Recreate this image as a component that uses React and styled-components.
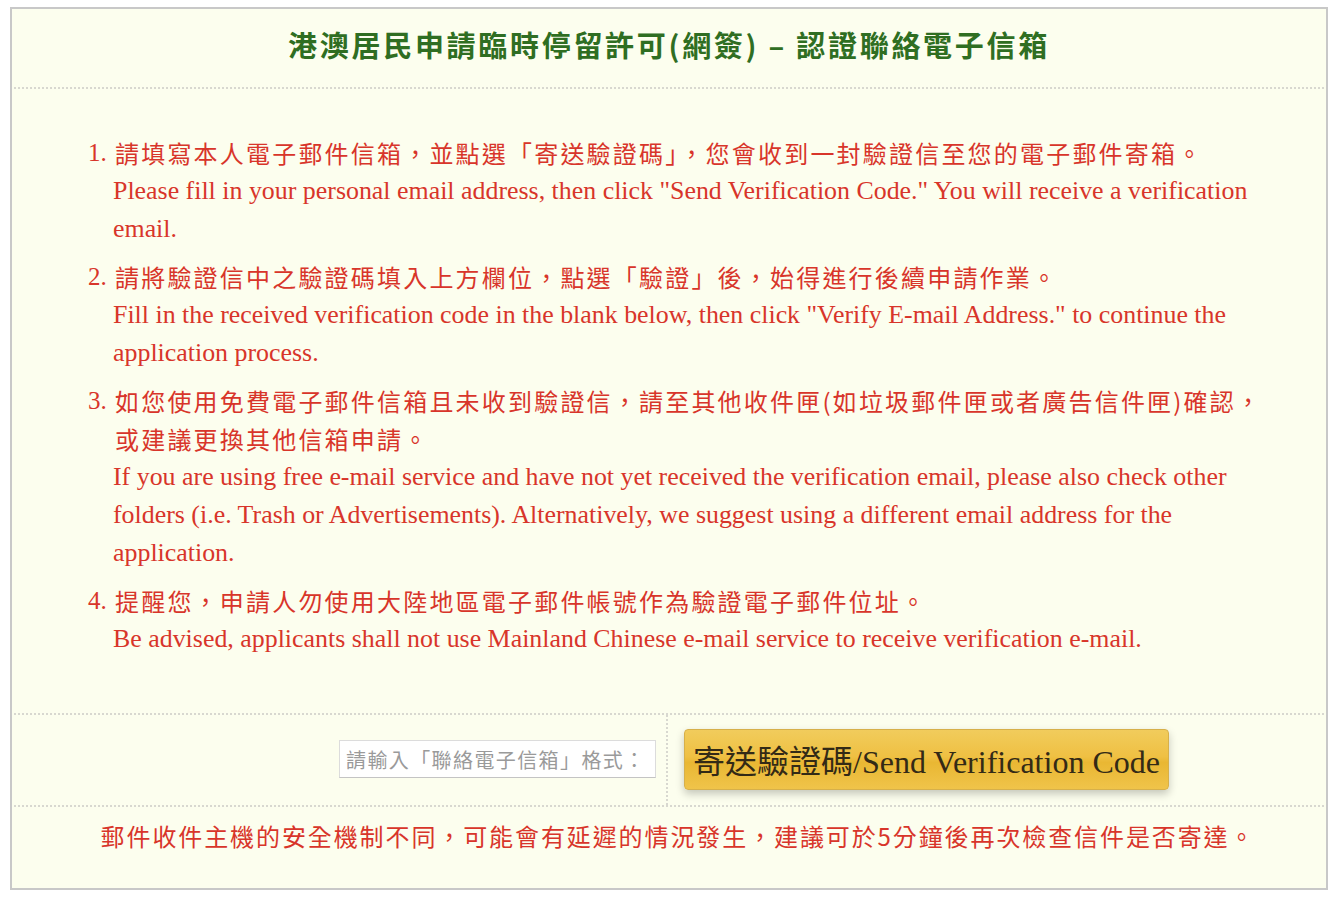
import React from 'react';
import styled, { createGlobalStyle } from 'styled-components';

const GlobalStyle = createGlobalStyle`
  html, body {
    margin: 0;
    padding: 0;
    background: #ffffff;
  }
  body {
    font-family: "Liberation Serif", "Noto Sans CJK TC", serif;
  }
`;

const Page = styled.div`
  padding: 7px 14px 14px 10px;
`;

const Box = styled.div`
  border: 2px solid #c8c8c8;
  background: #fcfeee;
  height: 883px;
  box-sizing: border-box;
  display: flex;
  flex-direction: column;
  padding: 0 2px;
`;

const Title = styled.h1`
  margin: 0;
  height: 80px;
  display: flex;
  align-items: center;
  justify-content: center;
  padding-bottom: 8px;
  box-sizing: border-box;
  font-family: "Noto Sans CJK TC", "Liberation Sans", sans-serif;
  font-weight: 700;
  font-size: 29px;
  letter-spacing: 2.7px;
  color: #2f6e22;
  border-bottom: 2px dotted #d8d8d0;
`;

const Notes = styled.ol`
  margin: 0;
  padding: 45px 58px 55px 74px;
  list-style: none;
  color: #d8352a;
  font-size: 25.9px;
  line-height: 38px;
  border-bottom: 2px dotted #d8d8d0;
`;

const Note = styled.li`
  display: grid;
  grid-template-columns: 27px 1fr;
  & + & {
    margin-top: 10px;
  }
`;

const Num = styled.span`
  font-family: "Liberation Serif", serif;
  font-size: 25px;
`;

const Zh = styled.div`
  font-family: "Noto Sans CJK TC", serif;
  letter-spacing: 2.2px;
  font-size: 24px;
`;

const En = styled.div`
  font-family: "Liberation Serif", serif;
  margin-left: -2px;
`;

const FormRow = styled.div`
  display: grid;
  grid-template-columns: 654px 1fr;
  height: 90px;
  border-bottom: 2px dotted #d8d8d0;
`;

const Cell = styled.div`
  display: flex;
  align-items: center;
  justify-content: ${(p) => (p.$align === 'right' ? 'flex-end' : 'flex-start')};
  padding: ${(p) => (p.$align === 'right' ? '0 10px 0 0' : '0 0 0 16px')};
  border-right: ${(p) => (p.$align === 'right' ? '2px dotted #d8d8d0' : 'none')};
`;

const EmailInput = styled.input`
  width: 317px;
  height: 38px;
  box-sizing: border-box;
  margin-bottom: 2px;
  border: 1px solid #dcdcdc;
  border-bottom-color: #c4c4c4;
  background: #ffffff;
  padding: 0 6px;
  font-family: "Noto Sans CJK TC", serif;
  font-size: 20px;
  letter-spacing: 1.4px;
  outline: none;
  &::placeholder {
    color: #9a9a9a;
  }
`;

const SendButton = styled.button`
  width: 485px;
  height: 61px;
  margin-bottom: 2px;
  border: 1px solid #d7b04a;
  border-radius: 4px;
  background: linear-gradient(to bottom, #f1cc5c 0%, #efc043 45%, #e9b733 55%, #f0c44a 100%);
  box-shadow: 0 4px 8px rgba(0, 0, 0, 0.22);
  color: #332a16;
  font-family: "Liberation Serif", "Noto Sans CJK TC", serif;
  font-size: 32px;
  padding: 0;
  cursor: pointer;
  white-space: nowrap;
`;

const Footer = styled.div`
  flex: 1;
  text-align: center;
  padding: 10px 0 0 18px;
  color: #d8352a;
  font-family: "Noto Sans CJK TC", serif;
  font-size: 24px;
  letter-spacing: 1.9px;
  line-height: 38px;
`;

const App = () => {
  return (
    <Page>
      <GlobalStyle />
      <Box>
        <Title>港澳居民申請臨時停留許可(網簽) – 認證聯絡電子信箱</Title>
        <Notes>
          <Note>
            <Num>1.</Num>
            <div>
              <Zh>請填寫本人電子郵件信箱，並點選「寄送驗證碼」，您會收到一封驗證信至您的電子郵件寄箱。</Zh>
              <En>
                Please fill in your personal email address, then click "Send Verification Code." You will
                receive a verification email.
              </En>
            </div>
          </Note>
          <Note>
            <Num>2.</Num>
            <div>
              <Zh>請將驗證信中之驗證碼填入上方欄位，點選「驗證」後，始得進行後續申請作業。</Zh>
              <En>
                Fill in the received verification code in the blank below, then click "Verify E-mail
                Address." to continue the application process.
              </En>
            </div>
          </Note>
          <Note>
            <Num>3.</Num>
            <div>
              <Zh>如您使用免費電子郵件信箱且未收到驗證信，請至其他收件匣(如垃圾郵件匣或者廣告信件匣)確認，或建議更換其他信箱申請。</Zh>
              <En>
                If you are using free e-mail service and have not yet received the verification email,
                please also check other folders (i.e. Trash or Advertisements). Alternatively, we suggest
                using a different email address for the application.
              </En>
            </div>
          </Note>
          <Note>
            <Num>4.</Num>
            <div>
              <Zh>提醒您，申請人勿使用大陸地區電子郵件帳號作為驗證電子郵件位址。</Zh>
              <En>
                Be advised, applicants shall not use Mainland Chinese e-mail service to receive
                verification e-mail.
              </En>
            </div>
          </Note>
        </Notes>
        <FormRow>
          <Cell $align="right">
            <EmailInput type="text" placeholder="請輸入「聯絡電子信箱」格式：" />
          </Cell>
          <Cell $align="left">
            <SendButton type="button">寄送驗證碼/Send Verification Code</SendButton>
          </Cell>
        </FormRow>
        <Footer>郵件收件主機的安全機制不同，可能會有延遲的情況發生，建議可於5分鐘後再次檢查信件是否寄達。</Footer>
      </Box>
    </Page>
  );
};

export default App;
